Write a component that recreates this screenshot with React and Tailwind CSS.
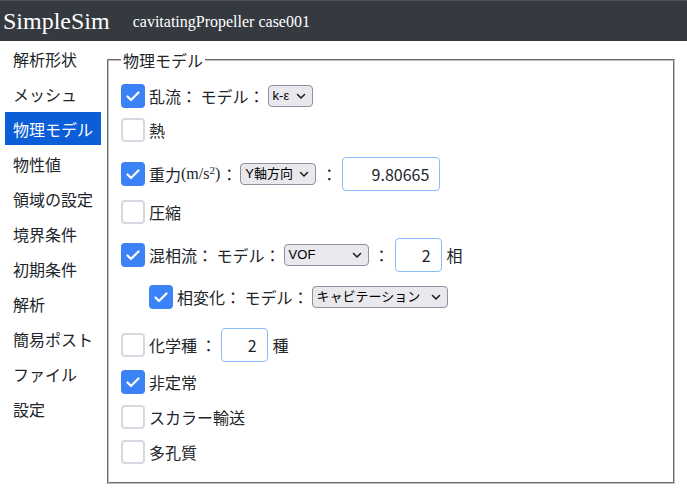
import React from 'react';

const cjk = { fontFamily: '"Noto Sans CJK JP", "Noto Sans", sans-serif' };

const menu = ['解析形状', 'メッシュ', '物理モデル', '物性値', '領域の設定', '境界条件', '初期条件', '解析', '簡易ポスト', 'ファイル', '設定'];

const Check = ({ checked }) =>
  checked ? (
    <span className="flex w-6 h-6 shrink-0 items-center justify-center rounded-[4px] bg-[#3b82f6]">
      <svg width="24" height="24" viewBox="0 0 24 24" fill="none">
        <path d="M6.5 12.5l3.5 3.5 7.5-7.5" stroke="white" strokeWidth="2.2" strokeLinecap="round" strokeLinejoin="round" />
      </svg>
    </span>
  ) : (
    <span className="block w-6 h-6 shrink-0 rounded-[4px] border-2 border-[#d6dae0] bg-white" />
  );

const Select = ({ value, width }) => (
  <span
    className={`relative flex h-[22px] ${width} items-center rounded-[4px] border border-[#8f8f9d] bg-[#e9e9ed] pl-[4px] text-[13px] text-black`}
    style={{ fontFamily: '"Liberation Sans", "Noto Sans CJK JP", sans-serif' }}
  >
    {value}
    <svg className="absolute right-[6px] top-[7px]" width="10" height="7" viewBox="0 0 10 7" fill="none">
      <path d="M1.5 1.5l3.5 3.5 3.5-3.5" stroke="#222" strokeWidth="1.6" strokeLinecap="round" strokeLinejoin="round" />
    </svg>
  </span>
);

const NumInput = ({ value, width }) => (
  <span className={`flex h-[34px] ${width} items-center justify-end rounded-[4px] border border-[#8dbbf9] bg-white pr-[10px] text-[16px]`}>
    {value}
  </span>
);

export default function App() {
  return (
    <div className="min-h-[498px] bg-white text-[#212529]" style={cjk}>
      {/* header */}
      <header className="flex h-[41px] items-center bg-[#343a40] border-t border-[#505458] text-white" style={{ fontFamily: '"Liberation Serif", serif' }}>
        <span className="ml-[3px] text-[24px] leading-none">SimpleSim</span>
        <span className="ml-[23px] mt-[2px] text-[16px] leading-none">cavitatingPropeller case001</span>
      </header>

      <div className="flex">
        {/* sidebar */}
        <nav className="flex w-[101px] shrink-0 flex-col gap-[2px] pl-[5px] pt-[1px]">
          {menu.map((m) => (
            <div
              key={m}
              className={`flex h-[33px] items-center pl-[8px] text-[16px] ${m === '物理モデル' ? 'bg-[#0b5ed7] text-white' : ''}`}
            >
              {m}
            </div>
          ))}
        </nav>

        {/* main */}
        <main className="flex-1 pl-[6px] pr-[12px] pt-[7px]">
          <fieldset className="border-2 border-[#c0c0c0] [border-style:groove] px-[12px] pt-[12px] pb-[18px]">
            <legend className="px-[2px] text-[16px] leading-6">物理モデル</legend>

            <div className="flex flex-col text-[16px]">
              <div className="flex h-6 items-center">
                <Check checked />
                <span className="ml-[4px]">乱流： モデル：</span>
                <span className="ml-[3px]"><Select value="k-ε" width="w-[45px]" /></span>
              </div>

              <div className="mt-[10px] flex h-6 items-center">
                <Check />
                <span className="ml-[4px]">熱</span>
              </div>

              <div className="mt-[15px] flex h-[34px] items-center">
                <Check checked />
                <span className="ml-[4px]">重力</span>
                <span style={{ fontFamily: '"Liberation Serif", serif' }}>
                  (m/s<sup className="text-[11px]">2</sup>)
                </span>
                <span className="ml-[1px]">：</span>
                <span className="ml-[3px]"><Select value="Y軸方向" width="w-[76px]" /></span>
                <span className="mx-[5px]">：</span>
                <NumInput value="9.80665" width="w-[98px]" />
              </div>

              <div className="mt-[9px] flex h-6 items-center">
                <Check />
                <span className="ml-[4px]">圧縮</span>
              </div>

              <div className="mt-[14px] flex h-[34px] items-center">
                <Check checked />
                <span className="ml-[4px]">混相流： モデル：</span>
                <span className="ml-[3px]"><Select value="VOF" width="w-[85px]" /></span>
                <span className="mx-[5px]">：</span>
                <NumInput value="2" width="w-[47px]" />
                <span className="ml-[5px]">相</span>
              </div>

              <div className="mt-[13px] ml-[28px] flex h-6 items-center">
                <Check checked />
                <span className="ml-[4px]">相変化： モデル：</span>
                <span className="ml-[3px]"><Select value="キャビテーション" width="w-[136px]" /></span>
              </div>

              <div className="mt-[19px] flex h-[34px] items-center">
                <Check />
                <span className="ml-[4px]">化学種 ：</span>
                <span className="ml-[4px]"><NumInput value="2" width="w-[47px]" /></span>
                <span className="ml-[5px]">種</span>
              </div>

              <div className="mt-[8px] flex h-6 items-center">
                <Check checked />
                <span className="ml-[4px]">非定常</span>
              </div>

              <div className="mt-[11px] flex h-6 items-center">
                <Check />
                <span className="ml-[4px]">スカラー輸送</span>
              </div>

              <div className="mt-[11px] flex h-6 items-center">
                <Check />
                <span className="ml-[4px]">多孔質</span>
              </div>
            </div>
          </fieldset>
        </main>
      </div>
    </div>
  );
}
